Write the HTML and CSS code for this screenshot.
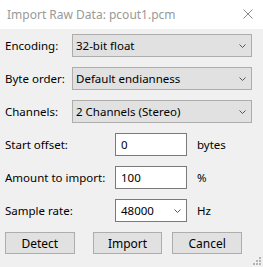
FILE: index.html
```html
<!DOCTYPE html>
<html lang="en">
<head>
    <meta charset="UTF-8">
    <title>Import Raw Data</title>
    <link rel="stylesheet" href="styles.css">
</head>
<body>
    <div class="dialog">
        <div class="titlebar">
            <span class="title">Import Raw Data: pcout1.pcm</span>
            <svg class="close" width="10" height="10" viewBox="0 0 10 10">
                <path d="M0.5 0.5 L9.5 9.5 M9.5 0.5 L0.5 9.5" stroke="#8a8a8a" stroke-width="1" fill="none"/>
            </svg>
        </div>
        <div class="content">
            <div class="row">
                <label class="label-short">Encoding:</label>
                <div class="combo">
                    <span>32-bit float</span>
                    <svg class="chev" width="7" height="4" viewBox="0 0 7 4"><path d="M0.5 0.5 L3.5 3.5 L6.5 0.5" stroke="#555" fill="none"/></svg>
                </div>
            </div>
            <div class="row">
                <label class="label-short">Byte order:</label>
                <div class="combo">
                    <span>Default endianness</span>
                    <svg class="chev" width="7" height="4" viewBox="0 0 7 4"><path d="M0.5 0.5 L3.5 3.5 L6.5 0.5" stroke="#555" fill="none"/></svg>
                </div>
            </div>
            <div class="row">
                <label class="label-short">Channels:</label>
                <div class="combo">
                    <span>2 Channels (Stereo)</span>
                    <svg class="chev" width="7" height="4" viewBox="0 0 7 4"><path d="M0.5 0.5 L3.5 3.5 L6.5 0.5" stroke="#555" fill="none"/></svg>
                </div>
            </div>
            <div class="row">
                <label class="label-long">Start offset:</label>
                <div class="field">0</div>
                <span class="unit">bytes</span>
            </div>
            <div class="row">
                <label class="label-long">Amount to import:</label>
                <div class="field">100</div>
                <span class="unit">%</span>
            </div>
            <div class="row">
                <label class="label-long">Sample rate:</label>
                <div class="field field-combo">
                    <span>48000</span>
                    <svg class="chev" width="7" height="4" viewBox="0 0 7 4"><path d="M0.5 0.5 L3.5 3.5 L6.5 0.5" stroke="#555" fill="none"/></svg>
                </div>
                <span class="unit">Hz</span>
            </div>
            <div class="buttons">
                <button class="btn btn-detect">Detect</button>
                <button class="btn">Import</button>
                <button class="btn">Cancel</button>
            </div>
        </div>
        <svg class="grip" width="8" height="8" viewBox="0 0 8 8" fill="#b4b4b4">
            <rect x="6" y="0" width="2" height="2"/>
            <rect x="3" y="3" width="2" height="2"/>
            <rect x="6" y="3" width="2" height="2"/>
            <rect x="0" y="6" width="2" height="2"/>
            <rect x="3" y="6" width="2" height="2"/>
            <rect x="6" y="6" width="2" height="2"/>
        </svg>
    </div>
</body>
</html>
```

FILE: styles.css
```css
body {
    margin: 0;
    padding: 0;
    font-family: "Noto Sans", "Open Sans", sans-serif;
    font-size: 11.5px;
    color: #000;
    background-color: #f0f0f0;
}

.dialog {
    position: relative;
    width: 263px;
    height: 267px;
    background-color: #f0f0f0;
    overflow: hidden;
}

.titlebar {
    height: 29px;
    background-color: #fff;
    display: flex;
    align-items: center;
    padding-left: 7px;
    padding-right: 10px;
    justify-content: space-between;
}

.title {
    color: #999;
    font-size: 12px;
    margin-top: -1px;
}

.close {
    display: block;
    margin-top: -1px;
}

.content {
    padding: 5px 11px 0 5px;
}

.row {
    display: flex;
    align-items: center;
    height: 23px;
    margin-bottom: 10px;
}

.label-short {
    width: 67px;
}

.label-long {
    width: 110px;
}

.combo {
    flex: 1;
    height: 23px;
    box-sizing: border-box;
    border: 1px solid #adadad;
    background-color: #e1e1e1;
    display: flex;
    align-items: center;
    justify-content: space-between;
    padding: 0 5px 0 3px;
}

.field {
    width: 72px;
    height: 23px;
    box-sizing: border-box;
    border: 1px solid #7a7a7a;
    background-color: #fff;
    padding: 0 5px;
    display: flex;
    align-items: center;
}

.field-combo {
    justify-content: space-between;
}

.chev {
    display: block;
}

.unit {
    margin-left: 10px;
}

.buttons {
    display: flex;
    margin-top: 4px;
}

.btn {
    width: 73px;
    height: 22px;
    box-sizing: border-box;
    border: 1px solid #adadad;
    background-color: #e1e1e1;
    font-family: inherit;
    font-size: 12px;
    color: #000;
    padding: 0;
    margin-right: 10px;
}

.btn-detect {
    margin-right: 18px;
}

.grip {
    position: absolute;
    right: 2px;
    bottom: 2px;
}
```
